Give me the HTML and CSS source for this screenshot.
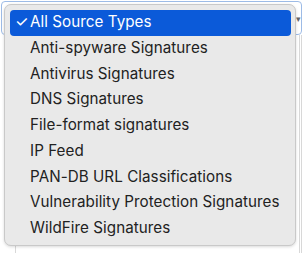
FILE: index.html
```
<!DOCTYPE html>
<html lang="en">
<head>
    <meta charset="UTF-8">
    <title>Source Types</title>
    <link rel="stylesheet" href="styles.css">
</head>
<body>
    <div class="field">
        <div class="select-box">
            <span class="chevron">&#9662;</span>
        </div>
        <div class="table-lines"></div>
    </div>

    <ul class="menu">
        <li class="menu-item selected"><span class="check">✓</span>All Source Types</li>
        <li class="menu-item">Anti-spyware Signatures</li>
        <li class="menu-item">Antivirus Signatures</li>
        <li class="menu-item">DNS Signatures</li>
        <li class="menu-item">File-format signatures</li>
        <li class="menu-item">IP Feed</li>
        <li class="menu-item">PAN-DB URL Classifications</li>
        <li class="menu-item">Vulnerability Protection Signatures</li>
        <li class="menu-item">WildFire Signatures</li>
    </ul>
</body>
</html>
```
FILE: styles.css
```
* {
    margin: 0;
    padding: 0;
    box-sizing: border-box;
}

body {
    font-family: Inter, 'Liberation Sans', sans-serif;
    background: #ffffff;
    width: 302px;
    height: 253px;
    position: relative;
    overflow: hidden;
}

.field {
    padding: 1px 0 0 1px;
}

.select-box {
    height: 34px;
    border: 1px solid #9dbbe6;
    border-radius: 4px;
    display: flex;
    justify-content: flex-end;
    align-items: center;
}

.chevron {
    font-size: 9px;
    color: #666;
}

.table-lines {
    height: 220px;
    margin-left: 14px;
    border-left: 1px solid #d8d8d8;
    border-right: 3px double #d8d8d8;
}

.menu {
    position: absolute;
    top: 4px;
    left: 4px;
    width: 292px;
    height: 242px;
    list-style: none;
    background: #e9e9e9;
    border: 1px solid #c9c9c9;
    border-radius: 7px;
    box-shadow: 0 1px 3px rgba(0, 0, 0, 0.15);
    padding: 5px 4px 5px 5px;
}

.menu-item {
    height: 25.75px;
    line-height: 24.5px;
    padding-left: 20px;
    font-size: 15.2px;
    letter-spacing: 0.05px;
    color: #222222;
    border-radius: 4px;
    white-space: nowrap;
}

.menu-item.selected {
    background: #0b5ad9;
    color: #ffffff;
    padding-left: 5px;
}

.check {
    display: inline-block;
    width: 15px;
}
```
